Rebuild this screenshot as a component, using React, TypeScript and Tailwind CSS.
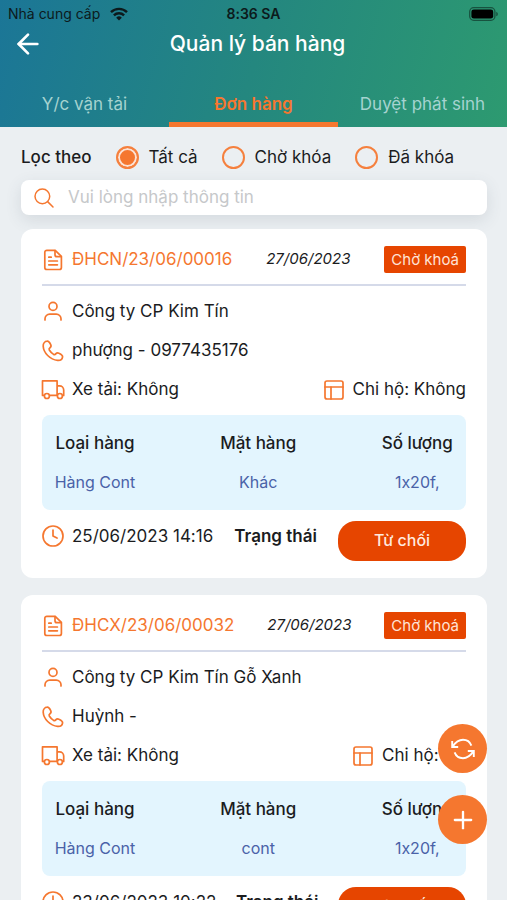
import type { ReactNode } from "react";
import { useState } from "react";
import { ArrowLeft, Clock, PanelsTopLeft, Plus } from "lucide-react";
import { IoSearchOutline } from "react-icons/io5";

type Order = {
  code: string;
  date: string;
  company: string;
  contact: string;
  truck: string;
  paid: string;
  kind: string;
  item: string;
  amount: string;
  time: string;
};

const orders: Order[] = [
  {
    code: "ĐHCN/23/06/00016",
    date: "27/06/2023",
    company: "Công ty CP Kim Tín",
    contact: "phượng - 0977435176",
    truck: "Không",
    paid: "Không",
    kind: "Hàng Cont",
    item: "Khác",
    amount: "1x20f,",
    time: "25/06/2023 14:16",
  },
  {
    code: "ĐHCX/23/06/00032",
    date: "27/06/2023",
    company: "Công ty CP Kim Tín Gỗ Xanh",
    contact: "Huỳnh -",
    truck: "Không",
    paid: "Có",
    kind: "Hàng Cont",
    item: "cont",
    amount: "1x20f,",
    time: "23/06/2023 10:22",
  },
];

const tabs = ["Y/c vận tải", "Đơn hàng", "Duyệt phát sinh"];
const filters = ["Tất cả", "Chờ khóa", "Đã khóa"];

function FileIcon() {
  return (
    <svg width="22" height="22" viewBox="0 0 22 22" fill="none" stroke="currentColor" strokeWidth="1.7" strokeLinecap="round" strokeLinejoin="round" aria-hidden="true">
      <path d="M13.2 1.3H4.8A2 2 0 0 0 2.8 3.3v15.2a2 2 0 0 0 2 2h12.6a2 2 0 0 0 2-2V7.4z" />
      <path d="M13 1.5v4.2a2 2 0 0 0 2 2h4.2" />
      <path d="M6.8 8.2h2.4M6.8 12h8.6M6.8 15.8h8.6" />
    </svg>
  );
}

function UserIcon() {
  return (
    <svg width="22" height="22" viewBox="0 0 22 22" fill="none" stroke="currentColor" strokeWidth="1.7" strokeLinecap="round" aria-hidden="true">
      <circle cx="11" cy="5.4" r="4" />
      <path d="M3 19v-1.2a4.7 4.7 0 0 1 4.7-4.7h6.6a4.7 4.7 0 0 1 4.7 4.7V19" />
    </svg>
  );
}

function PhoneIcon() {
  return (
    <svg width="22" height="22" viewBox="0 0 22 22" fill="none" stroke="currentColor" strokeWidth="1.7" strokeLinejoin="round" aria-hidden="true">
      <path d="M5.2 1.2C6.6 1 7.4 2 8.6 4.4 9.6 6.4 9.2 7 8 7.8 7 8.5 6.8 9 7.3 10c1.1 1.8 2.7 3.4 4.3 4.4 1.2.6 1.6.2 2.4-.8s1.4-1.2 3-.4c2.6 1.2 3.8 2 3.6 3.6-.4 2.6-2.6 3.8-5 3.6C8 19.6 1.6 12.8 1.2 6.2 1 3.4 2.8 1.4 5.2 1.2z" />
    </svg>
  );
}

function TruckIcon() {
  return (
    <svg className="shrink-0" width="24" height="22" viewBox="0 0 24 22" fill="none" stroke="currentColor" strokeWidth="1.7" strokeLinejoin="round" aria-hidden="true">
      <path d="M3.4 16.4H1.5V1.8h14.6v14.6H8.4" />
      <path d="M16.1 6.8h2.4a4.2 4.2 0 0 1 4.2 4.2v5.4h-1.2" />
      <circle cx="5.9" cy="17" r="2.5" />
      <circle cx="18.9" cy="17" r="2.5" />
    </svg>
  );
}

function RefreshIcon() {
  return (
    <svg width="24" height="24" viewBox="0 0 24 24" fill="none" stroke="currentColor" strokeWidth="1.9" aria-hidden="true">
      <path d="M1.2 4v6h6M1.6 9.6C5 4.6 8 2.8 12 2.8c3.8 0 7 2.2 8.4 5.8" />
      <path d="M16.8 14h6v6M22.4 14.4c-3.4 5-6.4 6.8-10.4 6.8-3.8 0-7-2.2-8.4-5.8" />
    </svg>
  );
}

function WifiIcon() {
  return (
    <svg width="18" height="14" viewBox="0 0 18 14" fill="none" stroke="currentColor" strokeWidth="2.4" aria-hidden="true">
      <path d="M1 5.2a11.4 11.4 0 0 1 16 0" />
      <path d="M3.9 8.3a7.2 7.2 0 0 1 10.2 0" />
      <path d="M9 13.6 6.2 10.7a4 4 0 0 1 5.6 0z" fill="currentColor" stroke="none" />
    </svg>
  );
}

function BatteryIcon() {
  return (
    <svg width="30" height="14" viewBox="0 0 30 14" aria-hidden="true">
      <rect x="0.7" y="0.7" width="25.2" height="12.6" rx="4" fill="none" stroke="#000" strokeOpacity="0.45" strokeWidth="1.3" />
      <rect x="2.4" y="2.4" width="21.8" height="9.2" rx="2.4" fill="#000" />
      <path d="M27.3 4.7a2.5 2.5 0 0 1 0 4.6z" fill="#000" fillOpacity="0.5" />
    </svg>
  );
}

function Info({ icon, children }: { icon: ReactNode; children: ReactNode }) {
  return (
    <div className="flex items-center gap-2">
      <span className="flex w-[22px] shrink-0 justify-center text-[#f5772f]">{icon}</span>
      <span className="whitespace-nowrap">{children}</span>
    </div>
  );
}

function OrderCard({ order }: { order: Order }) {
  return (
    <article className="rounded-xl bg-white px-[21px] py-[17px] text-[17px]">
      <div className="flex items-center justify-between border-b-2 border-[#d5dae9] pb-[11px]">
        <div className="text-[#f5772f]">
          <Info icon={<FileIcon />}>{order.code}</Info>
        </div>
        <span className="text-[15px] italic">{order.date}</span>
        <span className="rounded-xs bg-[#e64500] px-[7px] text-[15px] leading-[27px] text-[#ffe3d6]">Chờ khoá</span>
      </div>
      <div className="py-1.5 leading-[39px]">
        <Info icon={<UserIcon />}>{order.company}</Info>
        <Info icon={<PhoneIcon />}>{order.contact}</Info>
        <div className="flex justify-between">
          <Info icon={<TruckIcon />}>Xe tải: {order.truck}</Info>
          <Info icon={<PanelsTopLeft size={24} strokeWidth={1.7} className="shrink-0" />}>Chi hộ: {order.paid}</Info>
        </div>
      </div>
      <div className="rounded-lg bg-[#e3f5fe] pt-[9px] pb-2">
        <table className="w-full table-fixed text-center leading-[39px]">
          <thead>
            <tr>
              <th className="w-[25%] font-medium">Loại hàng</th>
              <th className="w-[52%] font-medium">Mặt hàng</th>
              <th className="w-[23%] font-medium">Số lượng</th>
            </tr>
          </thead>
          <tbody className="text-[16px] text-[#4a62a8]">
            <tr>
              <td>{order.kind}</td>
              <td>{order.item}</td>
              <td>{order.amount}</td>
            </tr>
          </tbody>
        </table>
      </div>
      <div className="mt-[11px] flex items-start justify-between leading-[30px]">
        <Info icon={<Clock size={24} strokeWidth={1.7} className="shrink-0" />}>{order.time}</Info>
        <span className="font-semibold">Trạng thái</span>
        <button type="button" className="h-10 w-32 rounded-[18px] bg-[#e64500] pb-0.5 text-[16px] font-medium text-[#ffe9df]">
          Từ chối
        </button>
      </div>
    </article>
  );
}

export default function App() {
  const [tab, setTab] = useState(1);
  const [filter, setFilter] = useState(0);

  return (
    <div className="flex h-screen flex-col overflow-hidden bg-[#ebeff2] font-['Inter','Noto_Sans',sans-serif] text-[#1b1c1e] [font-feature-settings:'calt'_0]">
      <header className="bg-linear-[105deg,#1b7697,#24877f_50%,#2d9a70]">
        <div className="grid grid-cols-3 items-center px-2 pt-1 text-[14px] leading-5 text-[#0c1a1c]">
          <span className="flex items-center gap-2.5 whitespace-nowrap">
            Nhà cung cấp <WifiIcon />
          </span>
          <span className="text-center font-semibold">8:36 SA</span>
          <span className="flex justify-end">
            <BatteryIcon />
          </span>
        </div>
        <div className="grid grid-cols-[40px_1fr_32px] items-center px-2 text-white">
          <button type="button" aria-label="Quay lại" className="flex justify-center">
            <ArrowLeft size={32} strokeWidth={2} />
          </button>
          <h1 className="text-center text-[21px] leading-10 font-medium">Quản lý bán hàng</h1>
        </div>
        <nav className="mt-[18px] grid grid-cols-3">
          {tabs.map((name, i) => (
            <button
              key={name}
              type="button"
              onClick={() => setTab(i)}
              className={
                i === tab
                  ? "h-[45px] border-b-[5px] border-[#f5772f] pt-1.5 text-[17px] font-semibold whitespace-nowrap text-[#f5772f]"
                  : "h-[45px] border-b-[5px] border-transparent pt-1.5 text-[17px] whitespace-nowrap text-[#a5d3d0]"
              }
            >
              {name}
            </button>
          ))}
        </nav>
      </header>

      <div className="relative min-h-0 flex-1">
        <main className="h-full overflow-y-auto pr-5 pl-[21px] [scrollbar-width:none]">
          <fieldset className="flex h-[53px] items-center gap-6 pt-2 text-[17px] whitespace-nowrap">
            <legend className="float-left font-medium">Lọc theo</legend>
            {filters.map((name, i) => (
              <label key={name} className="flex items-center gap-2.5">
                <input
                  type="radio"
                  name="filter"
                  checked={i === filter}
                  onChange={() => setFilter(i)}
                  className="size-[23px] appearance-none rounded-full border-2 border-[#f5803e] checked:bg-[#f5772f] checked:shadow-[inset_0_0_0_2px_#fbe3d6]"
                />
                {name}
              </label>
            ))}
          </fieldset>
          <label className="flex h-[35px] items-center gap-3 rounded-lg bg-white px-[11px] shadow-[0_5px_16px_rgba(60,80,90,0.13)]">
            <IoSearchOutline size={24} className="shrink-0 text-[#f5772f]" />
            <input
              type="text"
              aria-label="Tìm kiếm"
              placeholder="Vui lòng nhập thông tin"
              className="min-w-0 flex-1 bg-transparent text-[17px] outline-none placeholder:text-[#c6c8ca]"
            />
          </label>
          <div className="mt-3.5 flex flex-col gap-[17px] pb-5">
            {orders.map((order) => (
              <OrderCard key={order.code} order={order} />
            ))}
          </div>
        </main>
        <div className="absolute right-5 bottom-14 flex flex-col gap-[22px] text-white">
          <button type="button" aria-label="Tải lại" className="flex size-[49px] items-center justify-center rounded-full bg-[#f5772f]">
            <RefreshIcon />
          </button>
          <button type="button" aria-label="Thêm" className="flex size-[49px] items-center justify-center rounded-full bg-[#f5772f]">
            <Plus size={28} strokeWidth={2} />
          </button>
        </div>
      </div>
    </div>
  );
}
